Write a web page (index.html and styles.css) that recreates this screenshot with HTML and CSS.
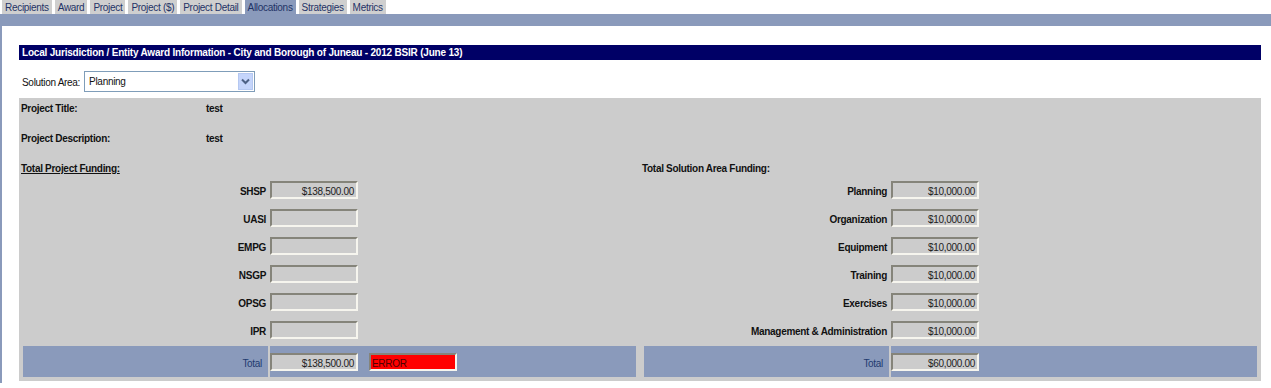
FILE: index.html
```html
<!DOCTYPE html>
<html lang="en">
<head>
  <meta charset="UTF-8" />
  <title>Allocations</title>
  <link rel="stylesheet" href="styles.css">
</head>
<body>
  <div class="tabs">
    <span class="tab">Recipients</span>
    <span class="tab">Award</span>
    <span class="tab">Project</span>
    <span class="tab">Project ($)</span>
    <span class="tab">Project Detail</span>
    <span class="tab active">Allocations</span>
    <span class="tab">Strategies</span>
    <span class="tab">Metrics</span>
  </div>
  <div class="tabbar"></div>

  <div class="main">
    <div class="header">Local Jurisdiction / Entity Award Information - City and Borough of Juneau - 2012 BSIR (June 13)</div>

    <div class="solution">
      <span class="solution-label">Solution Area:</span>
      <div class="select">
        <span class="select-text">Planning</span>
        <span class="select-btn">
          <svg width="9" height="7" viewBox="0 0 9 7"><path d="M1 1.5 L4.5 5 L8 1.5" fill="none" stroke="#4d6185" stroke-width="2"/></svg>
        </span>
      </div>
    </div>

    <div class="panel">
      <div class="info"><span class="info-label">Project Title:</span><span class="info-value">test</span></div>
      <div class="info"><span class="info-label">Project Description:</span><span class="info-value">test</span></div>

      <div class="funding">
        <div class="col">
          <div class="heading"><u>Total Project Funding:</u></div>
          <div class="row"><span class="lbl">SHSP</span><span class="val"><span class="box">$138,500.00</span></span></div>
          <div class="row"><span class="lbl">UASI</span><span class="val"><span class="box"></span></span></div>
          <div class="row"><span class="lbl">EMPG</span><span class="val"><span class="box"></span></span></div>
          <div class="row"><span class="lbl">NSGP</span><span class="val"><span class="box"></span></span></div>
          <div class="row"><span class="lbl">OPSG</span><span class="val"><span class="box"></span></span></div>
          <div class="row"><span class="lbl">IPR</span><span class="val"><span class="box"></span></span></div>
          <div class="row total">
            <span class="lbl">Total</span>
            <span class="val"><span class="box">$138,500.00</span><span class="box error">ERROR</span></span>
          </div>
        </div>

        <div class="col">
          <div class="heading">Total Solution Area Funding:</div>
          <div class="row"><span class="lbl">Planning</span><span class="val"><span class="box">$10,000.00</span></span></div>
          <div class="row"><span class="lbl">Organization</span><span class="val"><span class="box">$10,000.00</span></span></div>
          <div class="row"><span class="lbl">Equipment</span><span class="val"><span class="box">$10,000.00</span></span></div>
          <div class="row"><span class="lbl">Training</span><span class="val"><span class="box">$10,000.00</span></span></div>
          <div class="row"><span class="lbl">Exercises</span><span class="val"><span class="box">$10,000.00</span></span></div>
          <div class="row"><span class="lbl">Management &amp; Administration</span><span class="val"><span class="box">$10,000.00</span></span></div>
          <div class="row total">
            <span class="lbl">Total</span>
            <span class="val"><span class="box">$60,000.00</span></span>
          </div>
        </div>
      </div>
    </div>
  </div>
</body>
</html>
```

FILE: styles.css
```css
body {
  margin: 0;
  font-family: "Liberation Sans", Arial, sans-serif;
  font-size: 10px;
  letter-spacing: -0.3px;
  color: #111;
  background: #fff;
}
.tabs {
  display: flex;
  gap: 3px;
  padding-left: 2px;
  height: 14px;
}
.tab {
  background: #cfcfcf;
  color: #1f3366;
  padding: 1px 3px 0;
  line-height: 13px;
}
.tab.active {
  background: #8a9abb;
}
.tabbar {
  height: 12px;
  background: #8a9abb;
}
.main {
  border-left: 2px solid #8a9abb;
  padding: 19px 10px 0 17px;
  height: 338px;
}
.header {
  background: #000066;
  color: #fff;
  font-weight: bold;
  letter-spacing: -0.2px;
  height: 15px;
  line-height: 15px;
  padding-left: 3px;
}
.solution {
  display: flex;
  align-items: center;
  gap: 4px;
  height: 22px;
  margin-top: 10px;
  padding-left: 3px;
}
.solution-label {
  padding-top: 3px;
}
.select {
  display: flex;
  align-items: center;
  justify-content: space-between;
  width: 171px;
  height: 21px;
  box-sizing: border-box;
  border: 1px solid #7f9db9;
  background: #fff;
  padding: 1px 1px 1px 4px;
}
.select-btn {
  display: flex;
  align-items: center;
  justify-content: center;
  width: 15px;
  height: 17px;
  box-sizing: border-box;
  border: 1px solid #b5c8f1;
  background: #c5d5fb;
}
.panel {
  background: #cccccc;
  margin-top: 6px;
  padding: 0 2px 4px;
}
.info {
  display: flex;
  height: 30px;
  box-sizing: border-box;
  padding-top: 2px;
  line-height: 18px;
  font-weight: bold;
}
.info-label {
  width: 185px;
}
.funding {
  display: flex;
  gap: 4px;
}
.col {
  flex: 1;
}
.heading {
  font-weight: bold;
  height: 18px;
  box-sizing: border-box;
  padding-top: 4px;
  line-height: 14px;
}
.row {
  display: grid;
  grid-template-columns: 245px 1fr;
  column-gap: 2px;
  align-items: center;
  height: 28px;
  margin: 0 2px;
}
.lbl {
  text-align: right;
  padding-right: 2px;
  padding-top: 3px;
  font-weight: bold;
}
.val {
  display: flex;
  gap: 11px;
}
.box {
  display: block;
  width: 88px;
  height: 18px;
  box-sizing: border-box;
  border-style: solid;
  border-width: 2px;
  border-color: #85847a #f6f5ee #f6f5ee #85847a;
  background: #cccccc;
  text-align: right;
  padding: 2px 2px 0 0;
  line-height: 13px;
  color: #222;
}
.row.total {
  height: 31px;
  margin-top: 2px;
  align-items: stretch;
}
.row.total > span {
  background: #8a9abb;
  display: flex;
  align-items: center;
}
.row.total .lbl {
  justify-content: flex-end;
  font-weight: normal;
  color: #1f3a70;
  padding-right: 6px;
}
.box.error {
  background: #ff0000;
  color: #500000;
  text-align: left;
  padding-left: 1px;
}
```
